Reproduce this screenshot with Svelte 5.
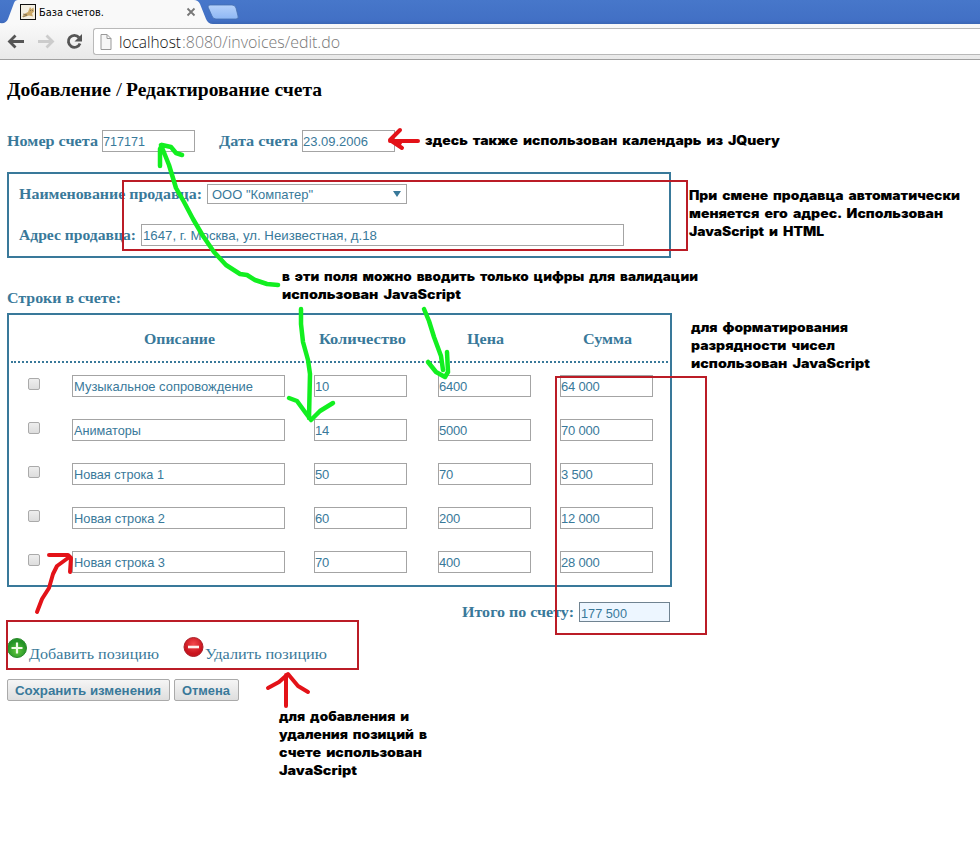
<script>
  const rows = [
    ['Музыкальное сопровождение', '10', '6400', '64 000', 179],
    ['Аниматоры', '14', '5000', '70 000', 67],
    ['Новая строка 1', '50', '70', '3 500', 90],
    ['Новая строка 2', '60', '200', '12 000', 91],
    ['Новая строка 3', '70', '400', '28 000', 91]
  ];
  const notes = [
    [425, 145, 355, 'здесь также использован календарь из JQuery'],
    [689, 200, 271, 'При смене продавца автоматически'],
    [689, 218, 254, 'меняется его адрес. Использован'],
    [689, 236, 135, 'JavaScript и HTML'],
    [282, 281, 416, 'в эти поля можно вводить только цифры для валидации'],
    [282, 299, 179, 'использован JavaScript'],
    [691, 332, 157, 'для форматирования'],
    [691, 350, 144, 'разрядности чисел'],
    [691, 368, 179, 'использован JavaScript'],
    [279, 721, 130, 'для добавления и'],
    [279, 739, 148, 'удаления позиций в'],
    [279, 757, 143, 'счете использован'],
    [279, 775, 78, 'JavaScript']
  ];
</script>

{#snippet label(text, width)}
  <svg class="fit" style:width="{width}px" height="20"><text y="15" textLength={width} lengthAdjust="spacingAndGlyphs">{text}</text></svg>
{/snippet}

<div class="page">
  <header>
    <div class="tabs">
      <svg class="tabshape" width="240" height="24">
        <defs>
          <linearGradient id="newtab" x2="0" y2="1"><stop stop-color="#b5d1fa" /><stop offset="1" stop-color="#8eb7f4" /></linearGradient>
        </defs>
        <path d="M0 24V23Q6 24 8 19L14 3Q15 0 18 0H194Q198 0 200 4L206 19Q208 24 213 24Z" fill="#f9f9f9" />
        <path d="M210 5H232Q235 5 236 8L238 16Q239 19 236 19H216Q213 19 212 16L208 7Q208 5 210 5Z" fill="url(#newtab)" stroke="#456fae" stroke-width=".8" />
        <rect x="20.500" y="4.500" width="15" height="15" fill="#f4efe2" stroke="#111" />
        <path d="M22 17l2-3 4-2 2-5 1.500 2 2-1.500.5 4-2 2 1 3-4-1-3 1z" fill="#cba868" />
        <path d="M23 14l4 1-4 2M30 10l1 1m2-1-1 1" fill="none" stroke="#776a50" stroke-width=".8" />
        <path d="M187.500 8.500l7 7m0-7-7 7" stroke="#777" stroke-width="1.800" />
      </svg>
      <span class="title">{@render label('База счетов.', 65)}</span>
    </div>
    <div class="toolbar">
      <svg width="94" height="35">
        <g fill="none" stroke-width="2.800">
          <path d="M24 17.500H10.500M15.500 11.500l-6 6 6 6" stroke="#555" />
          <path d="M38 17.500h13.500M46.500 11.500l6 6-6 6" stroke="#ccc" />
          <path d="M79 13.500A6 6 0 1 0 80 19.500" stroke="#555" />
        </g>
        <path d="M82 10v7.500h-7.500z" fill="#555" />
      </svg>
      <div class="address">
        <svg class="doc" width="13" height="16"><path d="M1 .5h6l4 4v11H1zM7 .5v4h4" fill="#f6f6f6" stroke="#999" /></svg>
        <div class="url">
          <span>{@render label('localhost', 62)}</span>
          <span class="path">{@render label(':8080/invoices/edit.do', 158)}</span>
        </div>
      </div>
    </div>
  </header>

  <main>
    <h3>{@render label('Добавление', 104)}<em>{@render label('/', 6)}</em>{@render label('Редактирование счета', 196)}</h3>
    <div class="top">
      <span class="lab">{@render label('Номер счета', 91)}</span>
      <div class="field w93">{@render label('717171', 42)}</div>
      <span class="lab date">{@render label('Дата счета', 79)}</span>
      <div class="field w93">{@render label('23.09.2006', 65)}</div>
    </div>

    <section class="seller">
      <div class="line first">
        <span class="lab">{@render label('Наименование продавца:', 183)}</span>
        <div class="field select">{@render label('ООО "Компатер"', 101)}<i></i></div>
      </div>
      <div class="line second">
        <span class="lab">{@render label('Адрес продавца:', 117)}</span>
        <div class="field addr">{@render label('1647, г. Москва, ул. Неизвестная, д.18', 234)}</div>
      </div>
    </section>

    <div class="lab caption">{@render label('Строки в счете:', 114)}</div>
    <section class="items">
      <div class="row head lab">
        <span></span>
        <span>{@render label('Описание', 71)}</span>
        <span>{@render label('Количество', 87)}</span>
        <span>{@render label('Цена', 37)}</span>
        <span>{@render label('Сумма', 49)}</span>
      </div>
      {#each rows as [name, count, price, sum, width]}
        <div class="row">
          <b class="check"></b>
          <div class="field">{@render label(name, width)}</div>
          <div class="field num">{count}</div>
          <div class="field num">{price}</div>
          <div class="field num">{sum}</div>
        </div>
      {/each}
    </section>

    <div class="total">
      <span class="lab">{@render label('Итого по счету:', 112)}</span>
      <div class="field sum">{@render label('177 500', 46)}</div>
    </div>

    <div class="links">
      <svg class="ico" width="21" height="22">
        <defs><radialGradient id="g" cy=".65"><stop stop-color="#62c83d" /><stop offset="1" stop-color="#239326" /></radialGradient></defs>
        <circle cx="10" cy="11" r="9.500" fill="url(#g)" stroke="#2b8a2c" /><path d="M10 5.500v11M4.500 11h11" stroke="#f1fbe9" stroke-width="2.200" />
      </svg>
      <span>{@render label('Добавить позицию', 130)}</span>
      <svg class="ico minus" width="21" height="22">
        <defs><radialGradient id="r" cy=".35"><stop stop-color="#f3474b" /><stop offset="1" stop-color="#c8131d" /></radialGradient></defs>
        <circle cx="10.500" cy="10" r="9.500" fill="url(#r)" stroke="#a92029" /><path d="M5 10h11" stroke="#fff0ed" stroke-width="2.600" />
      </svg>
      <span>{@render label('Удалить позицию', 122)}</span>
    </div>

    <div class="buttons">
      <div class="btn save">{@render label('Сохранить изменения', 146)}</div>
      <div class="btn cancel">{@render label('Отмена', 48)}</div>
    </div>
  </main>

  <svg class="marks" width="980" height="865">
    <g fill="none" stroke="#bb1c26" stroke-width="2">
      <path d="M123 181H687V250H123zM556 377H706V634H556zM7 621H358V669H7z" />
    </g>
    <g fill="none" stroke="#e31218" stroke-width="4" stroke-linecap="round" stroke-linejoin="round">
      <path d="M418 141H390M400 130L390 140L402 148M390 140L400 143" />
      <path d="M37 612L42 599L49 588L53 574L57 566L68 558M49 555L68 555L71 558L70 572" />
      <path d="M286 706V675M268 688L279 682L288 674L298 686L308 692" />
    </g>
    <g fill="none" stroke="#12ef20" stroke-width="4.500" stroke-linecap="round" stroke-linejoin="round">
      <path d="M278 285L267 284L255 280L247 275L240 274L226 265L214 252L203 236L193 219L184 202L176 188L169 165L161 145M160 166L160 149L162 145L171 147L176 153L182 155" />
      <path d="M301 309L301 324L303 342L308 360L310 374L309 418M289 398L297 401L305 412L311 420L320 411L333 403" />
      <path d="M424 309L429 321L434 337L441 356L443 370M428 362L436 372L445 377L448 372L447 352" />
    </g>
    <g class="notes">
      {#each notes as [x, y, w, text]}
        <text {x} {y} textLength={w} lengthAdjust="spacingAndGlyphs">{text}</text>
      {/each}
    </g>
  </svg>
</div>

<style>
  :global(body) { margin: 0; background: #fff; }
  .page { position: relative; width: 980px; height: 865px; overflow: hidden; color: #39799a; }
  svg { display: block; flex: none; }
  .fit { overflow: visible; }
  text { fill: currentColor; }
  .tabs { position: relative; height: 24px; background: linear-gradient(#4777ca, #4270c5 85%, #3b67b5); }
  .tabshape { position: absolute; left: 0; top: 0; }
  .title { position: absolute; left: 39px; top: 1px; color: #000; font: 11px "DejaVu Sans", sans-serif; }
  .toolbar { height: 35px; display: flex; background: linear-gradient(#f9f9f9, #e9e9e9); border-bottom: 1px solid #a0a0a0; }
  .address { margin: 4px 0 4px -1px; flex: 1; box-sizing: border-box; border: 1px solid #b9b9b9; border-right: 0; border-radius: 3px 0 0 3px; background: #fff; display: flex; align-items: center; height: 27px; padding-left: 6px; }
  .url { display: flex; gap: 1px; margin: 2px 0 0 6px; color: #111; font: 300 17px "Open Sans", sans-serif; }
  .path { color: #777; }
  main { padding: 21px 0 0 7px; }
  h3 { display: flex; gap: 4.500px; margin: 0; height: 49px; color: #000; font: bold 19px "Liberation Serif", serif; }
  h3 em { font-style: normal; font-weight: normal; }
  .lab { font: bold 15px "Liberation Serif", serif; }
  .top { display: flex; height: 42px; align-items: flex-start; }
  .top .lab { margin-top: 1px; margin-right: 4px; }
  .top .date { margin-left: 24px; }
  .field { box-sizing: border-box; height: 22px; border: 1px solid #a4a4a4; background: #fff; padding-left: 1px; font: 13px/21px "Liberation Sans", sans-serif; white-space: pre; display: flex; }
  .w93 { width: 93px; padding-left: 0; }
  .num { width: 93px; padding-left: 1px; letter-spacing: -.2px; }
  .row .num { padding-left: 0; }
  .seller { box-sizing: border-box; width: 664px; height: 86px; border: 2px solid #39799a; padding: 10px; }
  .line { display: flex; align-items: flex-start; }
  .line .lab { margin-right: 5px; }
  .second .lab { margin-top: 1px; }
  .first { height: 40px; }
  .select { width: 200px; height: 20px; padding: 0 5px 0 4px; justify-content: space-between; align-items: center; }
  .select i { border: 4px solid transparent; border-top: 6px solid #39799a; border-bottom: 0; }
  .line .addr { width: 483px; }
  .caption { margin-top: 30px; height: 25px; }
  .items { box-sizing: border-box; width: 665px; height: 274px; border: 2px solid #39799a; padding: 0 2px; }
  .row { display: grid; grid-template-columns: 61px 242px 124px 122px 93px; height: 44px; align-items: start; }
  .row .field:nth-child(2) { width: 213px; }
  .head { height: 46px; border-bottom: 2px dotted #39799a; margin-bottom: 12px; }
  .head span { padding-top: 14px; }
  .head span:nth-child(2) { padding-left: 72px; }
  .head span:nth-child(3) { padding-left: 5px; }
  .head span:nth-child(4) { padding-left: 29px; }
  .head span:nth-child(5) { padding-left: 23px; }
  .check { box-sizing: border-box; width: 12px; height: 12px; margin: 3px 0 0 17px; border: 1px solid #aaa; border-radius: 2px; background: linear-gradient(#eee, #ddd); }
  .total { margin-top: 15px; height: 35px; padding-left: 455px; display: flex; }
  .total .lab { margin-right: 5px; }
  .sum { width: 91px; height: 20px; border-color: #708391; background: #edf6ff; }
  .links { height: 42px; display: flex; font: 15px "Liberation Serif", serif; }
  .links span { margin-top: 7px; margin-left: 1px; }
  .minus { margin-left: 24px; }
  .buttons { display: flex; gap: 4px; }
  .btn { box-sizing: border-box; height: 22px; border: 1px solid #aaa; border-radius: 2px; background: linear-gradient(#f5f5f5, #dedede); padding-left: 7px; font: bold 13.500px "Liberation Sans", sans-serif; }
  .save { width: 163px; }
  .cancel { width: 65px; }
  .marks { position: absolute; inset: 0; pointer-events: none; }
  .notes { color: #000; font: 900 12.500px Inter, "Liberation Sans", sans-serif; word-spacing: 2px; }
</style>
